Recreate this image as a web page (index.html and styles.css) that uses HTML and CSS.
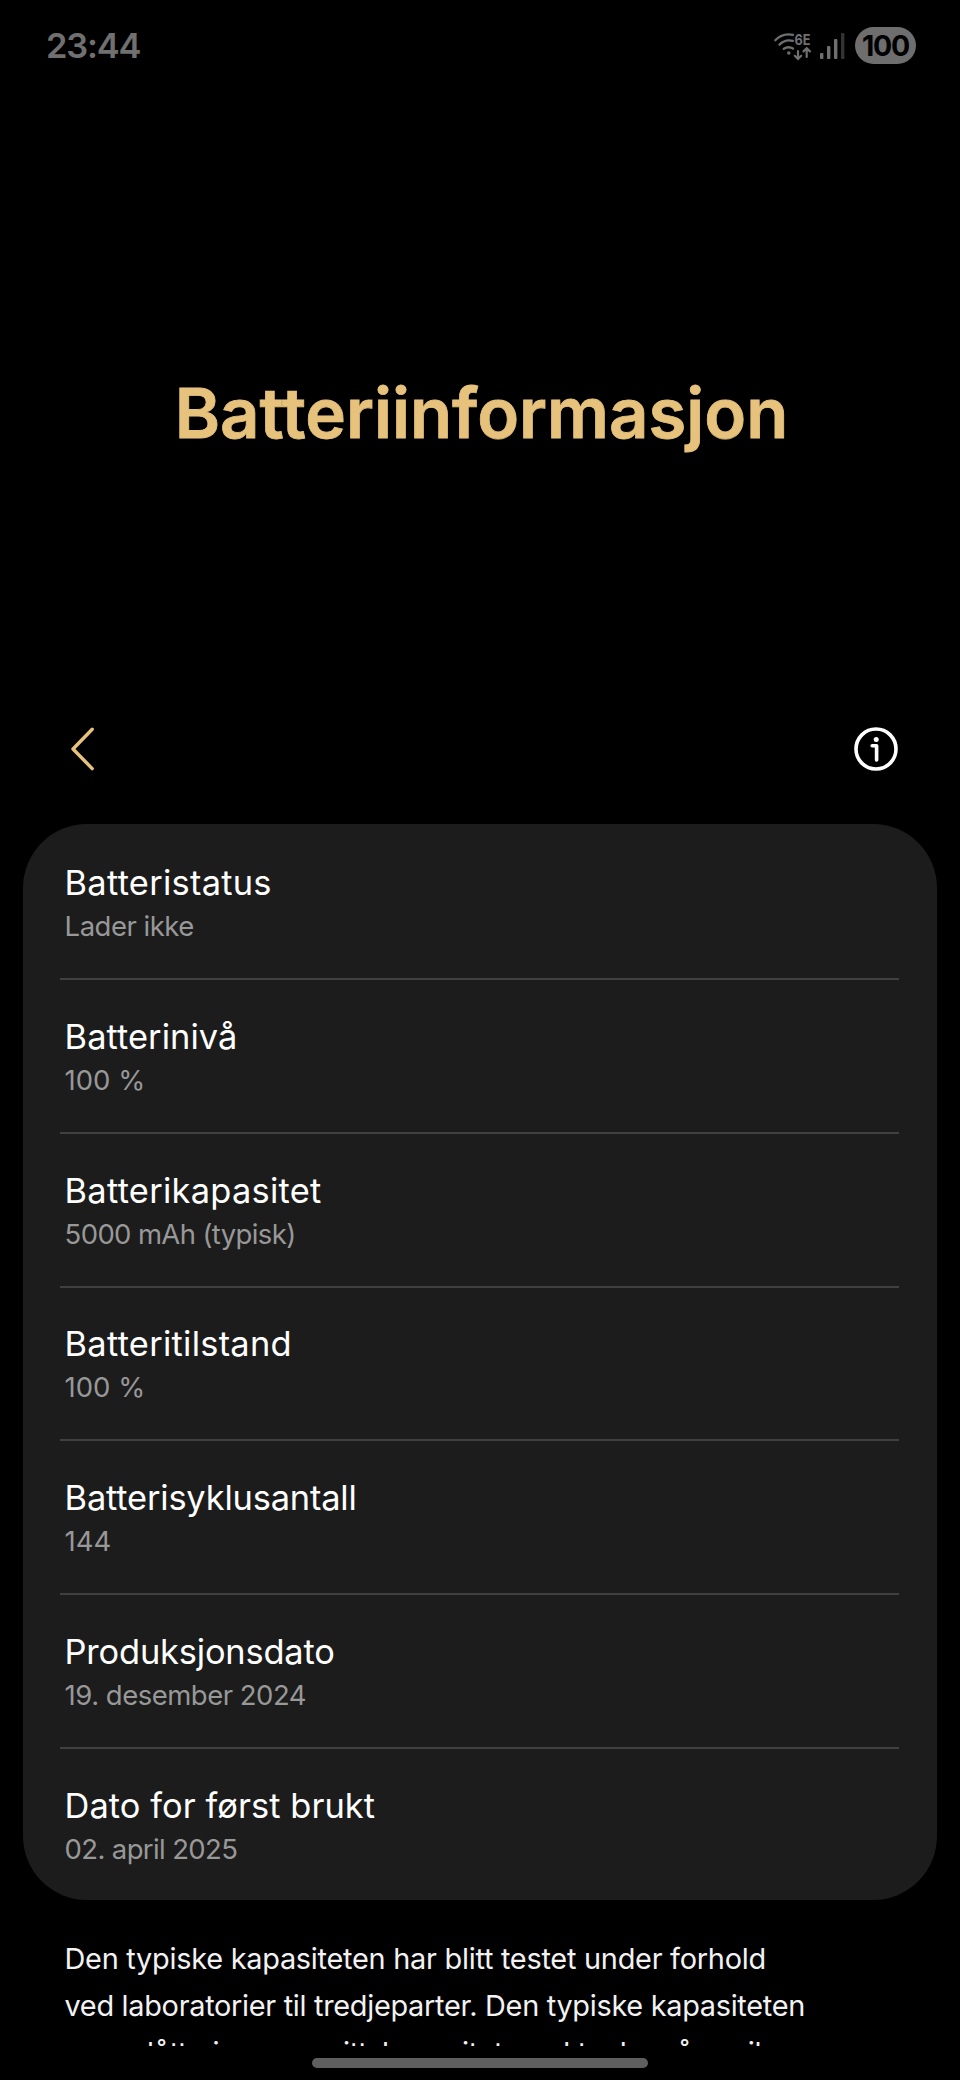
FILE: index.html
```html
<!DOCTYPE html>
<html lang="nb">
<head>
<meta charset="utf-8">
<title>Batteriinformasjon</title>
<link rel="stylesheet" href="styles.css">
</head>
<body>
<div class="screen">
  <header class="status-bar">
    <span class="clock">23:44</span>
    <div class="status-icons">
      <svg class="wifi" width="40" height="30" viewBox="0 0 40 30" fill="none" stroke="currentColor" stroke-linecap="round">
        <g stroke-width="2.3">
          <path d="M3.3 9.2A19 19 0 0 1 21 3.8"/>
          <path d="M7.5 13.6A14 14 0 0 1 20.8 9.9"/>
          <path d="M11.8 17.8A8.5 8.5 0 0 1 21 17.6"/>
        </g>
        <circle cx="16.8" cy="22" r="1.7" fill="currentColor" stroke="none"/>
        <path d="M26 20.2V27.6M22.8 24.8L26 28L29.2 24.8M34.7 26V17.6M31.5 20.4L34.7 17.2L37.9 20.4" stroke-width="2.2"/>
        <text class="wifi-gen" x="22.6" y="13.6" textLength="16" lengthAdjust="spacingAndGlyphs">6E</text>
      </svg>
      <svg class="signal" width="26" height="30" viewBox="0 0 26 30" fill="currentColor">
        <rect x="0" y="22" width="3.4" height="6" rx="1"/>
        <rect x="7" y="15" width="3.4" height="13" rx="1"/>
        <rect x="14" y="8" width="3.4" height="20" rx="1"/>
        <rect class="signal-off" x="21" y="2" width="3.4" height="26" rx="1"/>
      </svg>
      <span class="battery">100</span>
    </div>
  </header>

  <h1 class="title">Batteriinformasjon</h1>

  <nav class="toolbar">
    <svg width="24" height="44" viewBox="0 0 24 44" fill="none" stroke="#e6c27c" stroke-width="3.4" stroke-linecap="round" stroke-linejoin="round">
      <path d="M22.2 2.2L3 22L22.2 41.6"/>
    </svg>
    <svg width="44" height="44" viewBox="0 0 44 44" fill="none" stroke="#fff" stroke-width="3.6" stroke-linecap="round" stroke-linejoin="round">
      <circle cx="22" cy="22" r="20"/>
      <circle cx="22.2" cy="12.4" r="2.5" fill="#fff" stroke="none"/>
      <path d="M18.2 18.8H22.6V33"/>
    </svg>
  </nav>

  <main class="card">
    <section class="row"><div class="label l-status">Batteristatus</div><div class="value v-text">Lader ikke</div></section>
    <section class="row"><div class="label">Batterinivå</div><div class="value">100 %</div></section>
    <section class="row"><div class="label l-status">Batterikapasitet</div><div class="value v-long">5000 mAh (typisk)</div></section>
    <section class="row"><div class="label l-status">Batteritilstand</div><div class="value">100 %</div></section>
    <section class="row"><div class="label l-tight">Batterisyklusantall</div><div class="value">144</div></section>
    <section class="row"><div class="label l-tight">Produksjonsdato</div><div class="value v-text">19. desember 2024</div></section>
    <section class="row"><div class="label">Dato for først brukt</div><div class="value v-long">02. april 2025</div></section>
  </main>

  <p class="note"><span class="first-line">Den typiske kapasiteten har blitt testet under forhold</span><br>ved laboratorier til tredjeparter. Den typiske kapasiteten<br>er anslått gjennomsnittskapasitet med tanke på avvik</p>

  <div class="home-bar"></div>
</div>
</body>
</html>
```
FILE: styles.css
```css
* { box-sizing: border-box; }

body {
  margin: 0;
  background: #000;
  font-family: Inter, Roboto, "Liberation Sans", sans-serif;
  color: #fff;
}

.screen {
  display: flex;
  flex-direction: column;
  width: 960px;
  height: 2080px;
  overflow: hidden;
}

.status-bar {
  display: flex;
  justify-content: space-between;
  align-items: center;
  height: 91px;
  padding: 0 44px 0 46px;
  color: #707070;
}

.clock {
  font-size: 34.4px;
  font-weight: 600;
  line-height: 40px;
  letter-spacing: -1.2px;
}

.status-icons { display: flex; align-items: center; }

.wifi { margin-right: 8px; }

.wifi-gen {
  font-size: 14.8px;
  font-weight: 700;
  fill: currentColor;
  stroke: none;
}

.signal { margin-right: 9px; }

.signal-off { fill: #333; }

.battery {
  width: 61px;
  height: 37px;
  border-radius: 19px;
  background: #6e6e6e;
  color: #000;
  font-size: 28.5px;
  font-weight: 700;
  line-height: 37px;
  letter-spacing: -1.2px;
  text-align: center;
}

.title {
  margin: 282px 0 0;
  font-size: 68.8px;
  font-weight: 600;
  line-height: 80px;
  color: #e6c27c;
  -webkit-text-stroke: 0.8px #e6c27c;
  text-align: center;
  padding-left: 3px;
}

.toolbar {
  display: flex;
  justify-content: space-between;
  align-items: center;
  height: 44px;
  margin-top: 274px;
  padding: 0 62px 0 70px;
}

.card {
  flex: none;
  width: 913.4px;
  height: 1076px;
  margin: 53px 0 0 23.3px;
  padding: 2.3px 38px 0 36.7px;
  border-radius: 64px;
  background: #1c1c1c;
}

.row {
  height: 153.76px;
  padding: 35.8px 4.6px 0;
  border-bottom: 2px solid #404040;
}

.row:last-child { border-bottom: 0; }

.label {
  font-size: 34.4px;
  line-height: 42px;
  letter-spacing: 0.002em;
}

.l-status { letter-spacing: 0.008em; }
.l-tight { letter-spacing: -0.005em; }

.value {
  font-size: 27.5px;
  line-height: 45px;
  color: #989898;
}

.v-text { letter-spacing: -0.018em; }
.v-long { letter-spacing: -0.023em; }

.note {
  height: 111px;
  margin: 35px 0 0 64.5px;
  overflow: hidden;
  font-size: 28.9px;
  line-height: 47px;
  letter-spacing: -0.0105em;
  white-space: nowrap;
  color: #f2f2f2;
}

.first-line { letter-spacing: -0.009em; }

.home-bar {
  width: 336px;
  height: 10px;
  margin: 12px auto 0;
  border-radius: 5px;
  background: #5f5f5f;
}
```
